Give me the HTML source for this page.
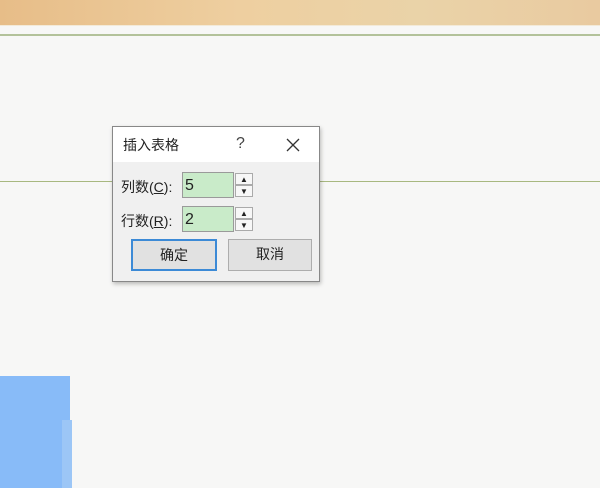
<!DOCTYPE html><html><head><style>
body{margin:0;width:600px;height:488px;background:#f7f7f6;position:relative;overflow:hidden;font-family:"Liberation Sans","Noto Sans CJK SC",sans-serif}
div{position:absolute;box-sizing:border-box}
.t{font-size:14px;color:#222}
.in{background:#c9ebc9;border:1px solid #9a9a9a;font-size:16px;color:#222;padding:4px 2px 0}
.sp{background:#f7f7f7;border:1px solid #aaa;width:18px;font-size:8px;text-align:center;line-height:11px;color:#222}
.b{border:1px solid #adadad;background:#e1e1e1;font-size:14px;text-align:center;line-height:29px;color:#222}
</style></head><body>
<div style="left:0;top:0;width:600px;height:25px;background:linear-gradient(90deg,#e7bd88,#eecfa0 40%,#ead3a8 70%,#e9caa0)"></div>
<div style="left:0;top:25px;width:600px;height:1px;background:#f3ead8"></div>
<div style="left:0;top:34px;width:600px;height:2px;background:#b3c29a"></div>
<div style="left:0;top:181px;width:600px;height:1px;background:#a8b880"></div>
<div style="left:0;top:376px;width:70px;height:112px;background:#88bbf8"></div>
<div style="left:62px;top:420px;width:10px;height:68px;background:#9cc6f6"></div>
<div style="left:112px;top:126px;width:208px;height:156px;background:#f0f0f0;border:1px solid #888;box-shadow:1px 2px 4px rgba(0,0,0,.25)">
<div style="left:0;top:0;width:206px;height:35px;background:#fff"></div>
<div class="t" style="left:10px;top:8px">插入表格</div>
<div style="left:123px;top:8px;font-size:16px;color:#444">?</div>
<svg style="position:absolute;left:173px;top:11px" width="14" height="14"><path d="M1 1L13 13M13 1L1 13" stroke="#333" stroke-width="1.3"/></svg>
<div class="t" style="left:8px;top:50px">列数(<u>C</u>):</div>
<div class="in" style="left:69px;top:45px;width:52px;height:26px">5</div>
<div class="sp" style="left:122px;top:46px;height:12px">▲</div>
<div class="sp" style="left:122px;top:58px;height:12px">▼</div>
<div class="t" style="left:8px;top:84px">行数(<u>R</u>):</div>
<div class="in" style="left:69px;top:79px;width:52px;height:26px">2</div>
<div class="sp" style="left:122px;top:80px;height:12px">▲</div>
<div class="sp" style="left:122px;top:92px;height:12px">▼</div>
<div class="b" style="left:18px;top:112px;width:86px;height:32px;border:2px solid #3c8ad6">确定</div>
<div class="b" style="left:115px;top:112px;width:84px;height:32px">取消</div>
</div>
</body></html>
